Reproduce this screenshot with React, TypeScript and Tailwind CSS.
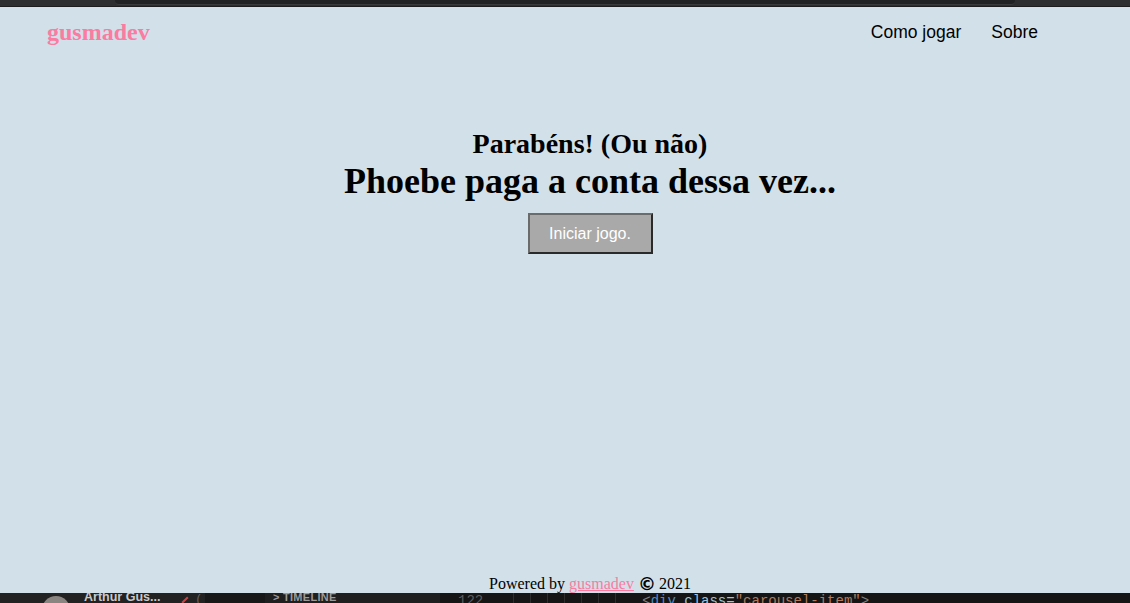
function TopStrip() {
    return (
        <div className="h-[7px] bg-[#2e2e30] border-b border-[#1c1c1e] shrink-0">
            <div className="ml-[115px] w-[900px] h-[5px] bg-[#222224] rounded-b-[4px] border-b border-[#3a3a3c]"></div>
        </div>
    )
}

function Header() {
    return (
        <div className="h-[50px] flex items-center justify-between pl-[47px] pr-[92px] shrink-0">
            <a className="text-[24px] font-bold text-[#fb7ba1] font-['Liberation_Serif',serif] leading-none">
                gusmadev
            </a>
            <div className="flex gap-x-[30px] text-[17.5px] text-black font-['Liberation_Sans',Arial,sans-serif]">
                <a>Como jogar</a>
                <a>Sobre</a>
            </div>
        </div>
    )
}

function BottomStrip() {
    return (
        <div className="h-[10px] flex overflow-hidden bg-[#1e1e1e] shrink-0 whitespace-nowrap font-['Liberation_Sans',Arial,sans-serif]">
            <div className="w-[205px] flex items-start bg-[#222222] shrink-0">
                <div className="ml-[42px] mt-[3px] w-[28px] h-[28px] rounded-full bg-[#8a8580] shrink-0"></div>
                <div className="ml-[14px] text-[12.5px] font-bold leading-none text-[#c9c9c9] -mt-[2px]">
                    Arthur Gus...
                </div>
                <div className="ml-[24px] mt-[3px] w-[2px] h-[8px] bg-[#d04040] rotate-45 shrink-0"></div>
                <div className="ml-[10px] text-[12px] leading-none text-[#666]">(</div>
            </div>
            <div className="w-[60px] bg-[#181818] shrink-0"></div>
            <div className="w-[175px] flex items-start bg-[#1f1f1f] pl-[8px] shrink-0">
                <div className="text-[11px] font-bold tracking-wide leading-none text-[#9a9a9a] -mt-[1px]">
                    &gt; TIMELINE
                </div>
            </div>
            <div className="flex-1 flex items-start bg-[#151515] font-['Liberation_Mono',monospace] text-[14px] leading-none">
                <div className="ml-[18px] text-[#5c5c5c] pt-[1px]">122</div>
                <div className="ml-[30px] flex gap-x-[16px] h-full">
                    <div className="w-px h-full bg-[#2e2e2e]"></div>
                    <div className="w-px h-full bg-[#2e2e2e]"></div>
                    <div className="w-px h-full bg-[#2e2e2e]"></div>
                    <div className="w-px h-full bg-[#2e2e2e]"></div>
                    <div className="w-px h-full bg-[#2e2e2e]"></div>
                    <div className="w-px h-full bg-[#2e2e2e]"></div>
                    <div className="w-px h-full bg-[#2e2e2e]"></div>
                </div>
                <div className="ml-[26px] pt-[1px] whitespace-pre">
                    <span className="text-[#7f7f7f]">&lt;</span>
                    <span className="text-[#4f8cc0]">div</span>
                    <span className="text-[#9cc4dc]"> class</span>
                    <span className="text-[#bbbbbb]">=</span>
                    <span className="text-[#b07a5c]">"carousel-item"</span>
                    <span className="text-[#7f7f7f]">&gt;</span>
                </div>
            </div>
        </div>
    )
}

export default function App() {
    return (
        <div className="h-[603px] flex flex-col bg-[#d2e0e9] overflow-hidden">
            <TopStrip />
            <Header />
            <div className="flex-1 flex flex-col items-center pt-[71px] pl-[50px] font-['Liberation_Serif',serif] text-black">
                <h2 className="text-[28px] font-bold leading-[31px]">Parabéns! (Ou não)</h2>
                <h1 className="text-[36px] font-bold leading-[40px] mt-[2px]">Phoebe paga a conta dessa vez...</h1>
                <button className="mt-[12px] w-[125px] h-[41px] bg-[#a9a9a9] border-2 border-t-[#6b6b6b] border-l-[#6b6b6b] border-r-[#2a2a2a] border-b-[#2a2a2a] text-white text-[16px] font-['Liberation_Sans',Arial,sans-serif]">
                    Iniciar jogo.
                </button>
            </div>
            <div className="h-[18px] flex justify-center items-end pl-[50px] text-[16px] leading-[18px] text-black font-['Liberation_Serif',serif] shrink-0">
                <span>Powered by&nbsp;</span>
                <a className="text-[#fb7ba1] underline">gusmadev</a>
                <span className="ml-[4px] mr-[3px] text-[18px] font-bold leading-[18px] font-['DejaVu_Sans',sans-serif]">©</span>
                <span>2021</span>
            </div>
            <BottomStrip />
        </div>
    )
}
